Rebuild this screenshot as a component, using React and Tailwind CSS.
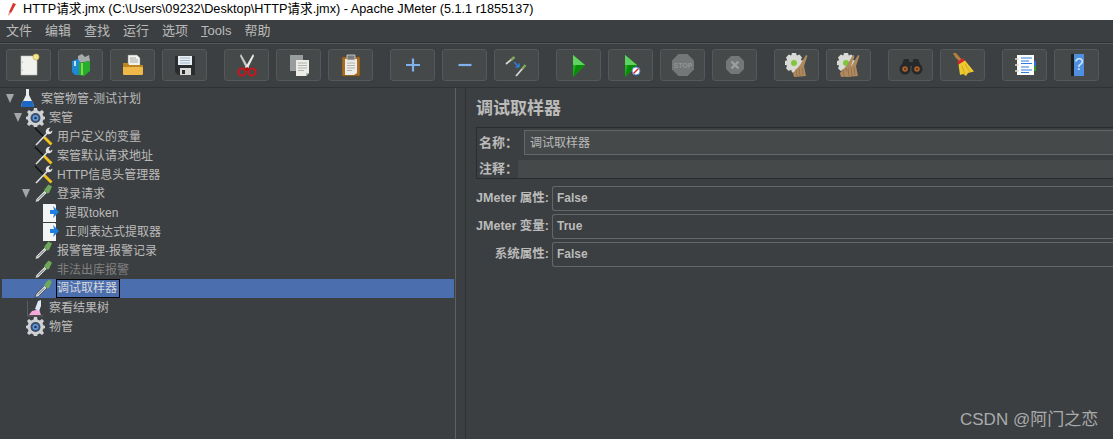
import React from 'react';

const FONT = '"Liberation Sans", "Noto Sans CJK SC", sans-serif';

// toolbar icons, all on a 24x24 box
const NewIcon = () => (
  <svg width="24" height="24" viewBox="0 0 24 24">
    <path d="M4 3h14l2 2v17H4z" fill="#f1f1ee" stroke="#bdbdb8" strokeWidth=".6" />
    <circle cx="5.500" cy="9" r=".6" fill="#999" /><circle cx="5.500" cy="17" r=".6" fill="#999" />
    <circle cx="19" cy="4" r="3" fill="#f6e58d" stroke="#c9b458" strokeWidth=".8" />
  </svg>
);
const TemplatesIcon = () => (
  <svg width="24" height="24" viewBox="0 0 24 24">
    <path d="M9 3l4-2 3 3 4-2 1 6-12 2z" fill="#a5abab" />
    <path d="M3 8l6-2 2 3v13l-5 0-3-3z" fill="#1e88d0" />
    <path d="M10 10l11-2v10l-6 5-5-1z" fill="#27ad2b" />
    <path d="M12 10h2v12h-2z" fill="#7fdc4e" />
    <path d="M5 8h2v5H5z" fill="#bfe3f7" />
  </svg>
);
const OpenIcon = () => (
  <svg width="24" height="24" viewBox="0 0 24 24">
    <path d="M7 2h9l3 3v9H7z" fill="#f2f2ee" stroke="#888" strokeWidth=".5" />
    <path d="M9 5h6M9 7h8M9 9h8" stroke="#888" strokeWidth=".7" />
    <path d="M2 10h5l1 2h14v9l-1 1H3l-1-1z" fill="#b9861f" />
    <path d="M2 14h20v7l-1 1H3l-1-1z" fill="#efb848" />
  </svg>
);
const SaveIcon = () => (
  <svg width="24" height="24" viewBox="0 0 24 24">
    <path d="M2 3h20v19H5l-3-3z" fill="#2a2d2f" />
    <path d="M5 3h14v9H5z" fill="#e9eef2" />
    <path d="M7 5h10M7 7.500h10M7 10h10" stroke="#8fa9c4" strokeWidth=".8" />
    <path d="M7 15h11v7H7z" fill="#d8d8d4" />
    <path d="M9 17h3v4H9z" fill="#2a2d2f" />
  </svg>
);
const CutIcon = () => (
  <svg width="24" height="24" viewBox="0 0 24 24">
    <path d="M6 1l8 14-2 2L5 3z" fill="#c9c9c6" />
    <path d="M18 1l-8 14 2 2 7-14z" fill="#ecece9" />
    <circle cx="7" cy="19" r="3.600" fill="none" stroke="#c9161b" strokeWidth="2" />
    <circle cx="17" cy="19" r="3.600" fill="none" stroke="#c9161b" strokeWidth="2" />
    <path d="M9 16l3-2 3 2-3 2z" fill="#a81317" />
  </svg>
);
const CopyIcon = () => (
  <svg width="24" height="24" viewBox="0 0 24 24">
    <path d="M3 2h13v16H3z" fill="#9a9d9d" />
    <path d="M9 7h13v13l-3 3H9z" fill="#ecece8" />
    <path d="M11 10h9M11 12.500h9M11 15h9M11 17.500h6" stroke="#a3a3a0" strokeWidth=".8" />
    <path d="M19 23v-3h3z" fill="#b5b5b0" />
  </svg>
);
const PasteIcon = () => (
  <svg width="24" height="24" viewBox="0 0 24 24">
    <path d="M3 4h18v19H3z" fill="#a66d24" stroke="#6f4816" strokeWidth=".6" />
    <path d="M6 6h12v14l-3 2H6z" fill="#ecece8" />
    <path d="M8 2h8v5H8z" fill="#77797a" stroke="#d8d8d4" strokeWidth=".8" />
    <path d="M8 10h8M8 12.500h8M8 15h8M8 17.500h5" stroke="#a3a3a0" strokeWidth=".8" />
  </svg>
);
const PlusIcon = () => (
  <svg width="24" height="24" viewBox="0 0 24 24">
    <path d="M5 12h14M12 5.500v13" stroke="#7fb2ec" strokeWidth="2.200" />
  </svg>
);
const MinusIcon = () => (
  <svg width="24" height="24" viewBox="0 0 24 24">
    <path d="M5.500 12h13" stroke="#7fb2ec" strokeWidth="2.200" />
  </svg>
);
const ToggleIcon = () => (
  <svg width="24" height="24" viewBox="0 0 24 24">
    <path d="M1 11l6-5" stroke="#d7d7d4" strokeWidth="1.800" />
    <path d="M6 7l3.500-3" stroke="#7faa58" strokeWidth="2.400" />
    <path d="M11 23l7-8" stroke="#d7d7d4" strokeWidth="1.800" />
    <path d="M17 16l3.500-4" stroke="#7faa58" strokeWidth="2.400" />
    <path d="M9 9l5 5M14 14v-3.500M14 14h-3.500" stroke="#2f7de0" strokeWidth="1.400" fill="none" />
  </svg>
);
const PlayIcon = ({ noTimer }) => (
  <svg width="24" height="24" viewBox="0 0 24 24">
    <path d="M6 2l12 10-12 12z" fill="#16b516" />
    <path d="M6 2l12 10H6z" fill="#5fd35f" />
    <path d="M6 24l12-12H9z" fill="#0b8a0b" />
    {noTimer && <circle cx="17" cy="18" r="4" fill="#fff" stroke="#4a90d9" />}
    {noTimer && <path d="M14.500 20.500l5-5" stroke="#e02020" strokeWidth="1.500" />}
  </svg>
);
const StopIcon = () => (
  <svg width="24" height="24" viewBox="0 0 24 24">
    <path d="M7.500 1h9L23 7.500v9L16.500 23h-9L1 16.500v-9z" fill="#747778" />
    <text x="12" y="14.500" textAnchor="middle" fontSize="7" fontWeight="700" fill="#919495" fontFamily={FONT}>STOP</text>
  </svg>
);
const ShutdownIcon = () => (
  <svg width="24" height="24" viewBox="0 0 24 24">
    <path d="M8 3h8l5 5v8l-5 5H8l-5-5V8z" fill="#747778" />
    <path d="M8.500 8.500l7 7M15.500 8.500l-7 7" stroke="#9c9f9f" strokeWidth="2.400" />
  </svg>
);
const BroomHead = ({ x = 0 }) => (
  <g transform={`translate(${x} 0)`}>
    <path d="M15 12l6-10 1.500.8L19 13l2 10-12 1-1-4z" fill="#b08a5f" />
    <path d="M11 16l1 7M14 15l1 8M17 14l1 8" stroke="#8f6c45" strokeWidth=".8" />
  </g>
);
const ClearIcon = ({ all }) => (
  <svg width="24" height="24" viewBox="0 0 24 24">
    <path d="M7 0h4l.8 2.600 2.600-1 2.600 2.800-1.200 2.600 2.700.8v4l-2.700.8 1.200 2.600-2.800 2.800-2.500-1.200-.7 2.700H7l-.8-2.700-2.500 1.200L1 15.200l1.200-2.600L0 12V8l2.200-.8L1 4.400l2.800-2.800 2.400 1z" fill="#d9d9d6" />
    <circle cx="9" cy="10" r="3" fill="#7fc73c" />
    {all && <BroomHead x={-5} />}
    <BroomHead />
  </svg>
);
const SearchIcon = () => (
  <svg width="24" height="24" viewBox="0 0 24 24">
    <path d="M5 6h5v3h4V6h5l4 10h-9l-1-3h-2l-1 3H1z" fill="#26282a" />
    <circle cx="6" cy="16" r="5.500" fill="#26282a" /><circle cx="18" cy="16" r="5.500" fill="#26282a" />
    <circle cx="6" cy="16" r="2.800" fill="#a8622c" /><circle cx="18" cy="16" r="2.800" fill="#a8622c" />
    <circle cx="6" cy="16" r="1" fill="#5c2f10" /><circle cx="18" cy="16" r="1" fill="#5c2f10" />
  </svg>
);
const BroomIcon = () => (
  <svg width="24" height="24" viewBox="0 0 24 24">
    <path d="M2 0h3l6 7-2 2-5-5z" fill="#b5803d" />
    <path d="M6 9l6-4 2 2.500-6 4z" fill="#d8272b" />
    <path d="M7.500 11.500l6.500-4 9 11-6 1.500-2 3-3-2-3 1z" fill="#eec92f" />
    <path d="M11 13l3 9M14 11l5 8" stroke="#c29b16" strokeWidth=".7" />
  </svg>
);
const LogIcon = () => (
  <svg width="24" height="24" viewBox="0 0 24 24">
    <path d="M20 8h3v5h-3z" fill="#2f6fd0" /><path d="M20 13h3v5h-3z" fill="#2c9c2c" />
    <path d="M4 2h17v20H4z" fill="#fdfdfb" />
    <path d="M8 5h11M8 8h8M8 10.500h11M8 14h8M8 17h11M8 19.500h8" stroke="#2f7de0" strokeWidth="1" />
    <path d="M2 6h4M2 12h4M2 18h4" stroke="#dcdcd8" strokeWidth="1.600" />
  </svg>
);
const HelpIcon = () => (
  <svg width="24" height="24" viewBox="0 0 24 24">
    <path d="M6 1h3v22H6z" fill="#1d1e20" />
    <path d="M9 1h10v22H9z" fill="#4f8fe0" />
    <text x="14" y="17" textAnchor="middle" fontSize="16" fill="#dce9fa" fontFamily={FONT}>?</text>
  </svg>
);

// tree icons
const Flask = () => (
  <svg width="19" height="19" viewBox="0 0 19 19">
    <path d="M8 0h3v6l5 10-1 2H4l-1-2 5-10z" fill="#e8ecef" />
    <path d="M5 12h9l2 4-1 2H4l-1-2z" fill="#1c66c4" />
  </svg>
);
const Gear = () => (
  <svg width="19" height="19" viewBox="0 0 19 19">
    <path d="M8 0h3l.5 2.500 2.300 1 2.200-1.500 2 2-1.500 2.200 1 2.300L20 9v2l-2.500.5-1 2.300 1.500 2.200-2 2-2.200-1.500-2.300 1L11 20H8l-.5-2.500-2.300-1L3 18l-2-2 1.500-2.200-1-2.300L-1 11V9l2.500-.5 1-2.300L1 4l2-2 2.200 1.500 2.300-1z" fill="#cfd2d4" />
    <circle cx="9.500" cy="10" r="5" fill="#3d4d66" />
    <circle cx="9.500" cy="10" r="3" fill="#5b9ae6" />
    <circle cx="9.500" cy="10" r="1.300" fill="#22354f" />
  </svg>
);
const Wrench = () => (
  <svg width="19" height="19" viewBox="0 0 19 19">
    <path d="M1 1l10 10" stroke="#111213" strokeWidth="1.600" />
    <path d="M10 10l7.500 7.500" stroke="#efc11a" strokeWidth="2.800" />
    <path d="M2 18L13.500 6" stroke="#e0e0e0" strokeWidth="1.500" />
    <path d="M12 6c-1-2.500 1-5.500 4.500-5.500L14.500 3l1.500 2 2.500-1.500c0 3-3 4.500-5 3.500z" fill="#e4e4e4" />
  </svg>
);
const Dropper = () => (
  <svg width="19" height="19" viewBox="0 0 19 19">
    <path d="M1 18.500l1-3.500 8.500-8.500 2.500 2.500-8.500 8.500z" fill="#d2d5d6" stroke="#242526" strokeWidth=".6" />
    <path d="M10 6l4.500-5.500 3.500 2-3 6.500-2 .5z" fill="#6fa85a" />
    <path d="M4 15.500l6-6" stroke="#6a6d6e" strokeWidth="1" />
  </svg>
);
const DocArrow = () => (
  <svg width="19" height="19" viewBox="0 0 19 19">
    <path d="M1 1h12l1 1v17H1z" fill="#f3f4f4" />
    <path d="M11 3l6 6-6 6 1-4H8V7h4z" fill="#1f7fe0" />
  </svg>
);
const Tree = () => (
  <svg width="19" height="19" viewBox="0 0 19 19">
    <path d="M1.500 3v15h16" stroke="#5c5f60" strokeWidth="1" fill="none" />
    <path d="M3 17l3-4 4-1 3-1 2 6z" fill="#f1a9d8" />
    <path d="M9 11l3-8 3-1 0 6-2 5z" fill="#dfe8f6" />
  </svg>
);

const Arrow = () => (
  <span className="h-0 w-0 border-x-[4.500px] border-t-[9px] border-x-transparent border-t-[#a3a6a8]" />
);

const tools = [
  [<NewIcon />, <TemplatesIcon />, <OpenIcon />, <SaveIcon />],
  [<CutIcon />, <CopyIcon />, <PasteIcon />],
  [<PlusIcon />, <MinusIcon />, <ToggleIcon />],
  [<PlayIcon />, <PlayIcon noTimer />, <StopIcon />, <ShutdownIcon />],
  [<ClearIcon />, <ClearIcon all />],
  [<SearchIcon />, <BroomIcon />],
  [<LogIcon />, <HelpIcon />],
];

const rows = [
  { pl: 'pl-[4px]', open: true, icon: <Flask />, text: '案管物管-测试计划' },
  { pl: 'pl-[12px]', open: true, icon: <Gear />, text: '案管' },
  { pl: 'pl-[20px]', icon: <Wrench />, text: '用户定义的变量' },
  { pl: 'pl-[20px]', icon: <Wrench />, text: '案管默认请求地址' },
  { pl: 'pl-[20px]', icon: <Wrench />, text: 'HTTP信息头管理器' },
  { pl: 'pl-[20px]', open: true, icon: <Dropper />, text: '登录请求' },
  { pl: 'pl-[28px]', icon: <DocArrow />, text: '提取token' },
  { pl: 'pl-[28px]', icon: <DocArrow />, text: '正则表达式提取器' },
  { pl: 'pl-[20px]', icon: <Dropper />, text: '报警管理-报警记录' },
  { pl: 'pl-[20px]', icon: <Dropper />, text: '非法出库报警', disabled: true },
  { pl: 'pl-[20px]', icon: <Dropper />, text: '调试取样器', selected: true },
  { pl: 'pl-[12px]', icon: <Tree />, text: '察看结果树' },
  { pl: 'pl-[12px]', icon: <Gear />, text: '物管' },
];

const menus = ['文件', '编辑', '查找', '运行', '选项', 'Tools', '帮助'];

const SelectRow = ({ label, value }) => (
  <div className="flex h-[25px] items-center">
    <div className="w-[73px] shrink-0 whitespace-nowrap text-right text-[12.5px] font-bold text-[#bbbbbb]">{label}</div>
    <div className="ml-[3px] flex h-full flex-1 items-center rounded-l-[3px] border-y border-l border-[#646768] pb-[1px] pl-[4px] text-[12px] font-bold text-[#bbbbbb]">
      {value}
    </div>
  </div>
);

export default function App() {
  return (
    <div className="relative flex h-[439px] w-[1113px] flex-col overflow-hidden bg-[#3c3f41]" style={{ fontFamily: FONT }}>
      {/* window title */}
      <div className="flex h-[20px] shrink-0 items-center bg-white pl-[5px] text-[12.7px] text-black">
        <svg width="12" height="16" viewBox="0 0 12 16" className="mr-[6px]">
          <path d="M8 1l3 1-5 9-2-1z" fill="#d8342c" />
          <path d="M4 10l2 1-3 3z" fill="#e88" />
        </svg>
        HTTP请求.jmx (C:\Users\09232\Desktop\HTTP请求.jmx) - Apache JMeter (5.1.1 r1855137)
      </div>

      {/* menu */}
      <div className="flex h-[23px] shrink-0 items-center gap-[13px] border-b border-[#2f3133] pl-[6px] text-[13px] text-[#bbbbbb]">
        {menus.map(m => (
          <span key={m}>{m === 'Tools' ? <><span className="underline">T</span>ools</> : m}</span>
        ))}
      </div>

      {/* toolbar */}
      <div className="flex h-[44px] shrink-0 items-center gap-[17px] border-t border-[#55585a] pb-[1px] pl-[6px]">
        {tools.map((group, i) => (
          <div key={i} className="flex gap-[7px]">
            {group.map((icon, j) => (
              <div key={j} className="flex h-[32px] w-[45px] items-center justify-center rounded-[3px] border border-[#55585a] bg-[#45494a]">
                {icon}
              </div>
            ))}
          </div>
        ))}
      </div>

      <div className="flex flex-1 border-t border-[#2f3133]">
        {/* test plan tree */}
        <div className="ml-[2px] w-[452px] shrink-0 pt-[1px] text-[12px] text-[#bbbbbb]">
          {rows.map(r => (
            <div key={r.text} className={`flex h-[19px] items-center ${r.pl} ${r.selected ? 'bg-[#4b6eaf]' : ''}`}>
              <span className="flex w-[12px] shrink-0 items-center">{r.open && <Arrow />}</span>
              <span className="w-[19px] shrink-0">{r.icon}</span>
              {r.selected
                ? <span className="ml-[3px] border border-black pr-[2px] leading-[17px] text-[#d8d8d8]">{r.text}</span>
                : <span className={`ml-[4px] ${r.disabled ? 'text-[#808080]' : ''}`}>{r.text}</span>}
            </div>
          ))}
        </div>

        {/* split pane */}
        <div className="ml-[1px] w-[11px] shrink-0 border-x border-l-[#5e6162] border-r-[#2f3133]" />

        {/* sampler panel */}
        <div className="flex-1 pl-[10px] pt-[9px]">
          <div className="text-[17px] font-bold leading-[24px] text-[#bbbbbb]">调试取样器</div>
          <div className="mt-[6px] border-y border-l border-y-[#2a2c2e] border-l-[#2a2c2e] pl-[2px] pt-[2px]">
            <div className="flex h-[25px] items-center">
              <span className="w-[45px] shrink-0 text-[13px] font-bold text-[#bbbbbb]">名称：</span>
              <div className="flex h-full flex-1 items-center border-y border-l border-[#646768] bg-[#45494a] pl-[5px] text-[12px] text-[#bbbbbb]">调试取样器</div>
            </div>
            <div className="mt-[5px] flex h-[18px] items-center">
              <span className="w-[39px] shrink-0 text-[13px] font-bold text-[#bbbbbb]">注释：</span>
              <div className="h-full flex-1 bg-[#45494a]" />
            </div>
          </div>
          <div className="mt-[7px] flex flex-col gap-[3px]">
            <SelectRow label="JMeter 属性:" value="False" />
            <SelectRow label="JMeter 变量:" value="True" />
            <SelectRow label="系统属性:" value="False" />
          </div>
        </div>
      </div>

      {/* watermark */}
      <div className="absolute left-[960px] top-[409px] text-[17px] leading-[22px] text-[#a9abac]">CSDN @阿门之恋</div>
    </div>
  );
}
